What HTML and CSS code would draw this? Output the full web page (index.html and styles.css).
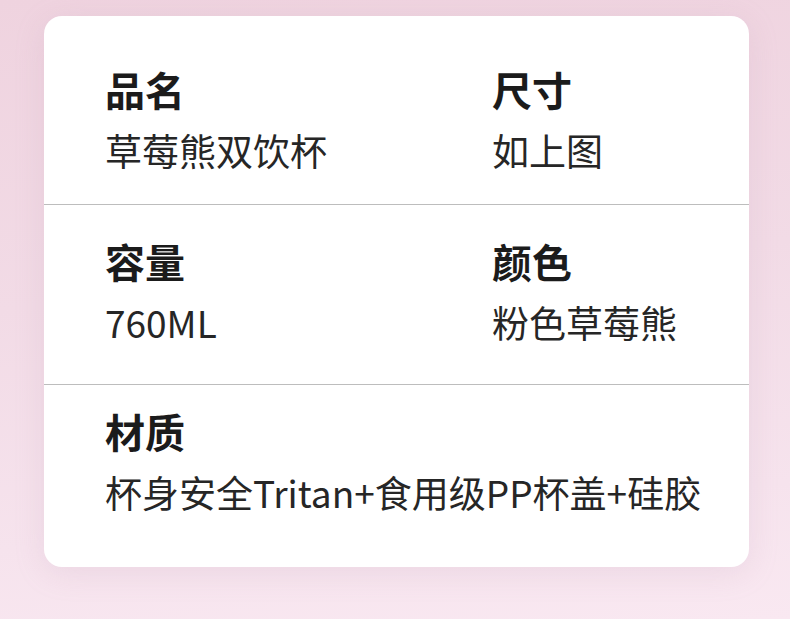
FILE: index.html
```html
<!DOCTYPE html>
<html lang="zh-CN">
<head>
<meta charset="utf-8">
<link rel="stylesheet" href="styles.css">
</head>
<body>
<div class="page">
  <div class="card">
    <div class="row row-1">
      <div class="cell">
        <div class="label">品名</div>
        <div class="value">草莓熊双饮杯</div>
      </div>
      <div class="cell">
        <div class="label">尺寸</div>
        <div class="value">如上图</div>
      </div>
    </div>
    <div class="row row-2">
      <div class="cell">
        <div class="label">容量</div>
        <div class="value">760ML</div>
      </div>
      <div class="cell">
        <div class="label">颜色</div>
        <div class="value">粉色草莓熊</div>
      </div>
    </div>
    <div class="row row-3 single">
      <div class="cell">
        <div class="label">材质</div>
        <div class="value">杯身安全Tritan+食用级PP杯盖+硅胶</div>
      </div>
    </div>
  </div>
</div>
</body>
</html>
```

FILE: styles.css
```css
html, body {
  margin: 0;
  padding: 0;
}
body {
  width: 790px;
  height: 619px;
  overflow: hidden;
  font-family: "Noto Sans CJK SC", "Noto Sans", sans-serif;
}
.page {
  width: 790px;
  height: 619px;
  padding: 16px 0 0 44px;
  box-sizing: border-box;
  background: linear-gradient(175deg, #efd3df 0%, #f2dbe6 45%, #f6e3ed 80%, #f9e8f1 100%);
}
.card {
  width: 705px;
  height: 551px;
  box-sizing: border-box;
  background: #ffffff;
  border-radius: 18px;
  box-shadow: 0 6px 30px rgba(190, 150, 175, 0.18);
  display: flex;
  flex-direction: column;
}
.row {
  display: grid;
  grid-template-columns: 387px 1fr;
  padding: 0 0 0 61px;
}
.row + .row {
  border-top: 1px solid #bdbdbd;
}
.row.single {
  grid-template-columns: 1fr;
}
.row-1 { padding-top: 53px; padding-bottom: 35px; }
.row-2 { padding-top: 36px; padding-bottom: 43px; }
.row-3 { padding-top: 26px; padding-bottom: 55px; }
.cell {
  display: flex;
  flex-direction: column;
  gap: 23px;
}
.label {
  font-size: 40px;
  line-height: 40px;
  font-weight: 700;
  color: #1b1b1b;
}
.value {
  font-size: 37px;
  line-height: 37px;
  font-weight: 400;
  color: #262626;
  white-space: nowrap;
}
```
